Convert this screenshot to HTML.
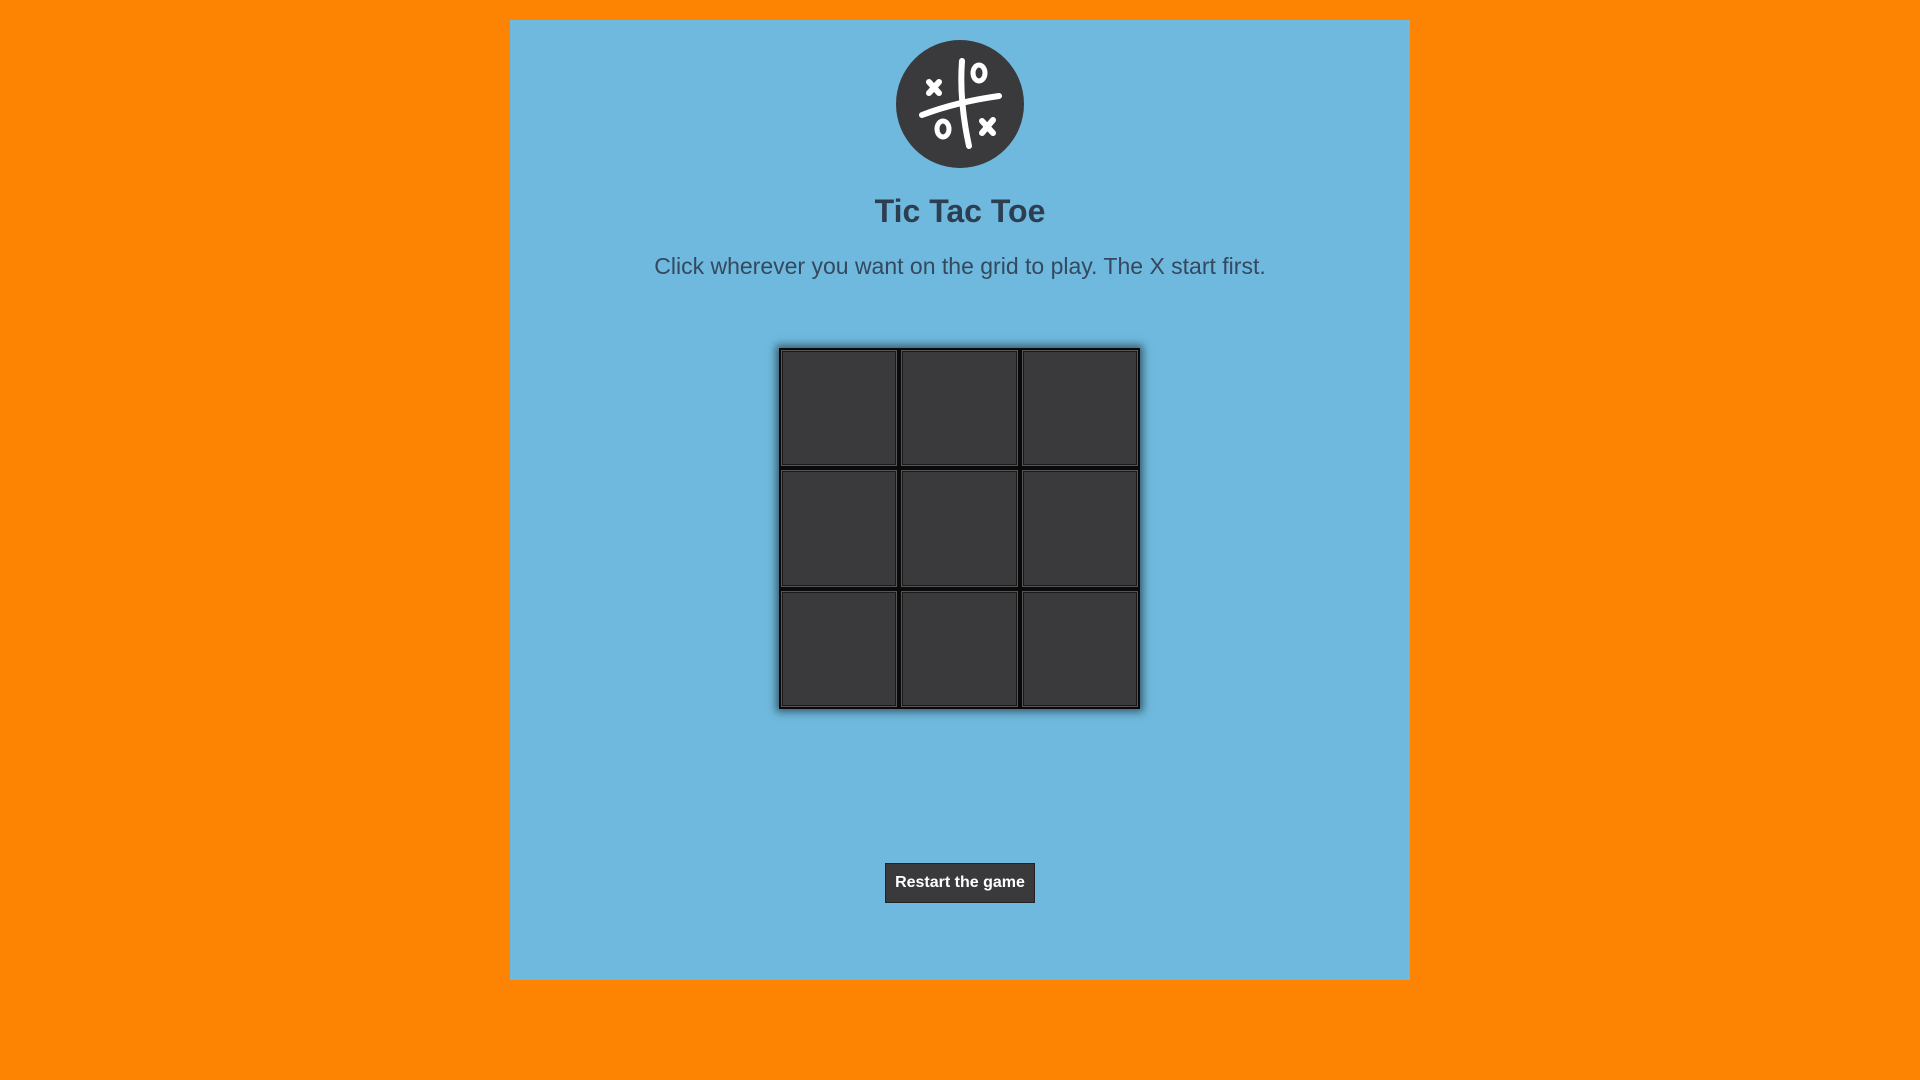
<!DOCTYPE html>
<html><head><meta charset="utf-8"><style>
html,body{margin:0;padding:0;width:1920px;height:1080px;background:#fd8402;overflow:hidden}
.panel{position:absolute;left:510px;top:20px;width:900px;height:960px;background:#6fb9de;font-family:"Liberation Sans",sans-serif;text-align:center;color:#2c3e50}
.logo{position:absolute;left:386px;top:20px;width:128px;height:128px}
h1{position:absolute;left:0;right:0;top:173px;margin:0;font-size:32px;font-weight:bold;color:#2c3e50}
p{position:absolute;left:0;right:0;top:233px;margin:0;font-size:23px;color:#34495e}
.grid{position:absolute;left:269px;top:328px;width:361px;height:361px;box-shadow:0 0 8px 3px rgba(0,0,0,.5);background:#0a0a0a;display:grid;grid-template-columns:repeat(3,1fr);grid-template-rows:repeat(3,1fr)}
.c{background:#3a3a3c;border:2px solid #0a0a0a;box-shadow:inset 0 0 0 1px #555,inset 0 0 0 2px #1a1a1a}
.btn{position:absolute;left:375px;top:843px;width:150px;height:40px;background:#3a3a3c;border:1px solid #222;box-sizing:border-box;color:#fff;font-weight:bold;font-size:16px;line-height:38px}
</style></head><body>
<div class="panel">
<svg class="logo" viewBox="0 0 128 128"><circle cx="64" cy="64" r="64" fill="#3a3a3c"/>
<g stroke="#fff" stroke-width="6" stroke-linecap="round" fill="none">
<path d="M66 21 Q63 60 73 106"/><path d="M26 75 Q60 62 103 56"/>
<path d="M33 42 L43 53 M43 42 L33 53"/><path d="M86 81 L97 93 M97 80 L86 93"/>
</g>
<g stroke="#fff" stroke-width="5" fill="none"><ellipse cx="83" cy="33" rx="6" ry="8"/><ellipse cx="47" cy="89" rx="6" ry="8"/></g>
</svg>
<h1>Tic Tac Toe</h1>
<p>Click wherever you want on the grid to play. The X start first.</p>
<div class="grid"><div class="c"></div><div class="c"></div><div class="c"></div><div class="c"></div><div class="c"></div><div class="c"></div><div class="c"></div><div class="c"></div><div class="c"></div></div>
<div class="btn">Restart the game</div>
</div>
</body></html>
